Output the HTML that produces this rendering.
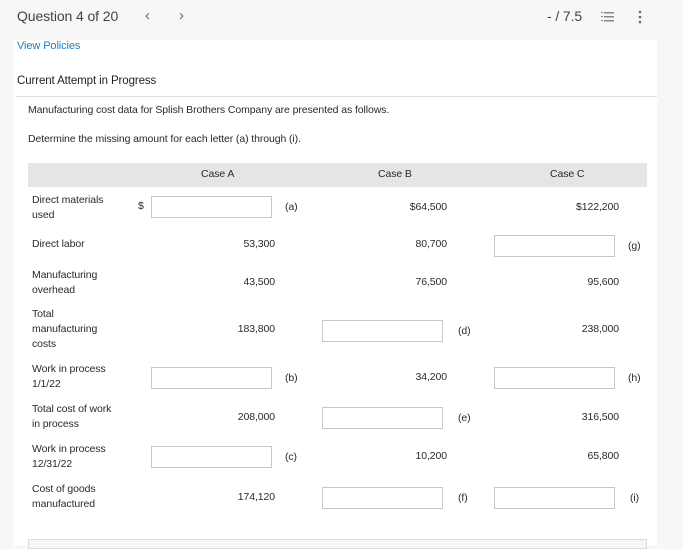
<!DOCTYPE html>
<html><head><meta charset="utf-8"><style>
*{margin:0;padding:0;box-sizing:border-box}
body{width:683px;height:546px;overflow:hidden;background:#f7f7f7;font-family:"Liberation Sans",sans-serif;color:#2a2a2a;position:relative;font-size:10.5px;letter-spacing:-0.1px}
.a{position:absolute;white-space:nowrap}
.main{position:absolute;left:13px;top:40px;width:644px;height:506px;background:#fff}
.inp{position:absolute;height:22px;border:1px solid #c8c8c8;background:#fff;width:121px}
.r{text-align:right}
</style></head><body>
<div class="a" style="left:17px;top:8px;font-size:14px;color:#444">Question 4 of 20</div>
<div class="a" style="left:145px;top:7px;font-size:15px;color:#666">‹</div>
<div class="a" style="left:179px;top:7px;font-size:15px;color:#666">›</div>
<div class="a" style="left:547px;top:8px;font-size:14px;color:#444">- / 7.5</div>
<svg class="a" style="left:601px;top:11px" width="14" height="12"><g fill="#888"><rect x="0" y="1" width="2" height="1"/><rect x="0" y="5" width="2" height="1"/><rect x="0" y="9" width="2" height="1"/><rect x="3" y="1" width="10" height="1.5"/><rect x="3" y="5" width="10" height="1.5"/><rect x="3" y="9" width="10" height="1.5"/></g></svg>
<svg class="a" style="left:638px;top:10px" width="4" height="14"><g fill="#666"><circle cx="2" cy="2" r="1.3"/><circle cx="2" cy="7" r="1.3"/><circle cx="2" cy="12" r="1.3"/></g></svg>
<div class="main"></div>
<div class="a" style="left:17px;top:40px;color:#1b7fbd;font-size:11px">View Policies</div>
<div class="a" style="left:17px;top:75px;font-size:11.5px;color:#222">Current Attempt in Progress</div>
<div class="a" style="left:16px;top:96px;width:641px;height:1px;background:#e0e0e0"></div>
<div class="a" style="left:28px;top:104px">Manufacturing cost data for Splish Brothers Company are presented as follows.</div>
<div class="a" style="left:28px;top:133px">Determine the missing amount for each letter (a) through (i).</div>
<div class="a" style="left:28px;top:163px;width:619px;height:24px;background:#e5e5e5"></div>
<div class="a" style="left:201px;top:168px">Case A</div>
<div class="a" style="left:378px;top:168px">Case B</div>
<div class="a" style="left:550px;top:168px">Case C</div>
<div class="a" style="left:28px;top:539px;width:619px;height:10px;background:#f6f6f6;border:1px solid #ddd"></div>

<div class="a" style="left:32px;top:193px;line-height:15px">Direct materials<br>used</div>
<div class="a" style="left:138px;top:200px">$</div>
<div class="inp" style="left:151px;top:196px"></div><div class="a" style="left:285px;top:201px">(a)</div>
<div class="a r" style="left:370px;top:201px;width:77px">$64,500</div>
<div class="a r" style="left:540px;top:201px;width:79px">$122,200</div>

<div class="a" style="left:32px;top:238px">Direct labor</div>
<div class="a r" style="left:200px;top:238px;width:75px">53,300</div>
<div class="a r" style="left:370px;top:238px;width:77px">80,700</div>
<div class="inp" style="left:494px;top:235px"></div><div class="a" style="left:628px;top:240px">(g)</div>

<div class="a" style="left:32px;top:268px;line-height:15px">Manufacturing<br>overhead</div>
<div class="a r" style="left:200px;top:276px;width:75px">43,500</div>
<div class="a r" style="left:370px;top:276px;width:77px">76,500</div>
<div class="a r" style="left:540px;top:276px;width:79px">95,600</div>

<div class="a" style="left:32px;top:307px;line-height:15px">Total<br>manufacturing<br>costs</div>
<div class="a r" style="left:200px;top:323px;width:75px">183,800</div>
<div class="inp" style="left:322px;top:320px"></div><div class="a" style="left:458px;top:325px">(d)</div>
<div class="a r" style="left:540px;top:323px;width:79px">238,000</div>

<div class="a" style="left:32px;top:362px;line-height:15px">Work in process<br>1/1/22</div>
<div class="inp" style="left:151px;top:367px"></div><div class="a" style="left:285px;top:372px">(b)</div>
<div class="a r" style="left:370px;top:371px;width:77px">34,200</div>
<div class="inp" style="left:494px;top:367px"></div><div class="a" style="left:628px;top:372px">(h)</div>

<div class="a" style="left:32px;top:402px;line-height:15px">Total cost of work<br>in process</div>
<div class="a r" style="left:200px;top:411px;width:75px">208,000</div>
<div class="inp" style="left:322px;top:407px"></div><div class="a" style="left:458px;top:412px">(e)</div>
<div class="a r" style="left:540px;top:411px;width:79px">316,500</div>

<div class="a" style="left:32px;top:442px;line-height:15px">Work in process<br>12/31/22</div>
<div class="inp" style="left:151px;top:446px"></div><div class="a" style="left:285px;top:451px">(c)</div>
<div class="a r" style="left:370px;top:450px;width:77px">10,200</div>
<div class="a r" style="left:540px;top:450px;width:79px">65,800</div>

<div class="a" style="left:32px;top:482px;line-height:15px">Cost of goods<br>manufactured</div>
<div class="a r" style="left:200px;top:491px;width:75px">174,120</div>
<div class="inp" style="left:322px;top:487px"></div><div class="a" style="left:458px;top:492px">(f)</div>
<div class="inp" style="left:494px;top:487px"></div><div class="a" style="left:630px;top:492px">(i)</div>
</body></html>
